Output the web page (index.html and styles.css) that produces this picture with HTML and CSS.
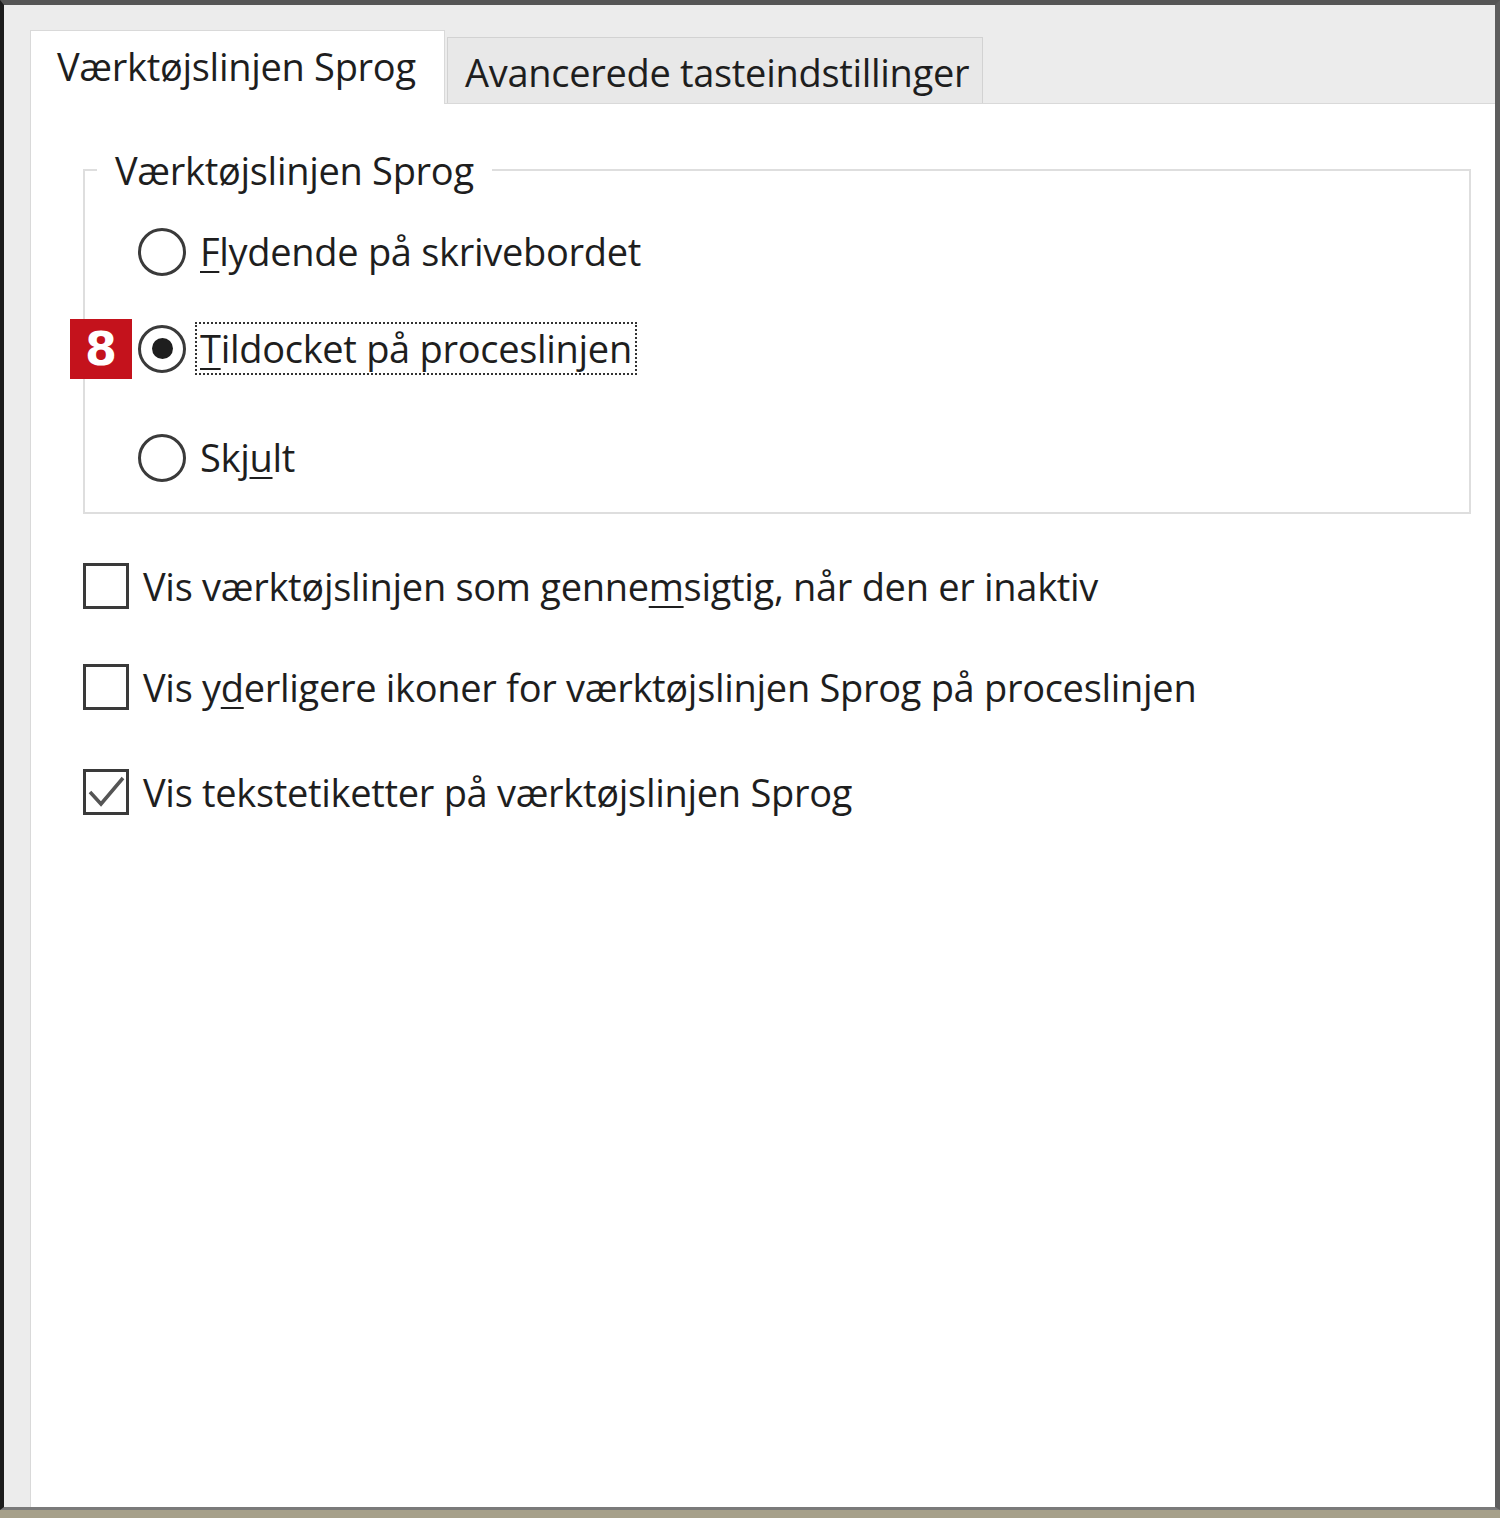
FILE: index.html
```html
<!DOCTYPE html>
<html lang="da">
<head>
<meta charset="utf-8">
<title>Teksttjenester og inputsprog</title>
<link rel="stylesheet" href="styles.css">
</head>
<body>
<div class="window">
  <div class="tabs">
    <div class="tab tab-active">Værktøjslinjen Sprog</div>
    <div class="tab tab-inactive">Avancerede tasteindstillinger</div>
  </div>
  <div class="panel">
    <fieldset class="group">
      <legend class="group-title">Værktøjslinjen Sprog</legend>
      <div class="opt opt-1">
        <span class="radio"></span>
        <span class="label"><u>F</u>lydende på skrivebordet</span>
      </div>
      <div class="opt opt-2">
        <span class="badge">8</span>
        <span class="radio radio-on"></span>
        <span class="label label-focus"><u>T</u>ildocket på proceslinjen</span>
      </div>
      <div class="opt opt-3">
        <span class="radio"></span>
        <span class="label">Skj<u>u</u>lt</span>
      </div>
    </fieldset>
    <div class="check check-1">
      <span class="box"></span>
      <span class="clabel">Vis værktøjslinjen som genne<u>m</u>sigtig, når den er inaktiv</span>
    </div>
    <div class="check check-2">
      <span class="box"></span>
      <span class="clabel">Vis y<u>d</u>erligere ikoner for værktøjslinjen Sprog på proceslinjen</span>
    </div>
    <div class="check check-3">
      <span class="box">
        <svg class="tick" viewBox="0 0 40 40" width="40" height="40"><path d="M4 20 L15 32 L37 6" fill="none" stroke="#555" stroke-width="3.5"/></svg>
      </span>
      <span class="clabel">Vis tekstetiketter på værktøjslinjen Sprog</span>
    </div>
  </div>
</div>
<div class="desk"></div>
</body>
</html>
```

FILE: styles.css
```css
* { box-sizing: border-box; }
html, body { margin: 0; padding: 0; }
body {
  width: 1500px;
  height: 1518px;
  overflow: hidden;
  background: #a6a08a;
  font-family: "Open Sans", "Liberation Sans", sans-serif;
  color: #1e1e1e;
}
.window {
  height: 1510px;
  background: #ececec;
  border-top: 5px solid #555;
  border-left: 4px solid #1c1c1c;
  border-right: 5px solid #5d5d5d;
  border-bottom: 3px solid #7a7a7a;
  display: flex;
  flex-direction: column;
}
.desk { height: 8px; background: #a6a08a; }

.tabs {
  display: flex;
  align-items: flex-end;
  padding: 25px 0 0 26px;
  gap: 2px;
  position: relative;
  z-index: 1;
}
.tab {
  font-size: 38px;
  line-height: 50px;
  letter-spacing: -0.3px;
  white-space: nowrap;
}
.tab-active {
  width: 415px;
  height: 74px;
  padding: 10px 0 0 26px;
  background: #fff;
  border: 1px solid #d9d9d9;
  border-bottom: none;
  margin-bottom: -1px;
}
.tab-inactive {
  width: 536px;
  height: 66px;
  padding: 9px 0 0 17px;
  background: #e8e8e8;
  border: 1px solid #d2d2d2;
  border-bottom: none;
}

.panel {
  flex: 1;
  margin-left: 26px;
  background: #fff;
  border-top: 1px solid #d9d9d9;
  border-left: 1px solid #d9d9d9;
  display: flex;
  flex-direction: column;
}

.group {
  margin: 41px 24px 0 52px;
  padding: 0 0 28px 0;
  border: 2px solid #dedede;
  min-width: 0;
}
.group-title {
  margin-left: 12px;
  padding: 0 18px;
  font-size: 38px;
  line-height: 50px;
  letter-spacing: -0.3px;
}

.opt {
  position: relative;
  display: flex;
  align-items: center;
  height: 53px;
  padding-left: 53px;
  font-size: 38px;
  letter-spacing: -0.3px;
}
.opt-1 { margin-top: 30px; }
.opt-2 { margin-top: 44px; }
.opt-3 { margin-top: 56px; }

.radio {
  width: 48px;
  height: 48px;
  border: 3px solid #3a3a3a;
  border-radius: 50%;
  background: #fff;
  flex: none;
  display: flex;
  align-items: center;
  justify-content: center;
}
.radio-on::after {
  content: "";
  width: 21px;
  height: 21px;
  border-radius: 50%;
  background: #1e1e1e;
}
.label {
  margin-left: 9px;
  padding: 0 3px;
  line-height: 49px;
  border: 2px solid transparent;
  white-space: nowrap;
}
.label-focus { border: 2px dotted #333; }
.label u, .clabel u { text-decoration-thickness: 2px; text-underline-offset: 5px; }

.badge {
  position: absolute;
  left: -15px;
  top: 50%;
  transform: translateY(-50%);
  width: 62px;
  height: 60px;
  background: #c4121c;
  color: #fff;
  font-family: "DejaVu Sans", "Liberation Sans", sans-serif;
  font-weight: bold;
  font-size: 46px;
  line-height: 60px;
  text-align: center;
  letter-spacing: 0;
}

.check {
  display: flex;
  align-items: center;
  height: 50px;
  margin-left: 52px;
  font-size: 38px;
  letter-spacing: -0.3px;
  white-space: nowrap;
}
.check-1 { margin-top: 47px; }
.check-2 { margin-top: 51px; }
.check-3 { margin-top: 55px; }
.box {
  width: 46px;
  height: 46px;
  border: 3px solid #3a3a3a;
  background: #fff;
  flex: none;
  display: flex;
  align-items: center;
  justify-content: center;
}
.clabel { margin-left: 14px; }
```
